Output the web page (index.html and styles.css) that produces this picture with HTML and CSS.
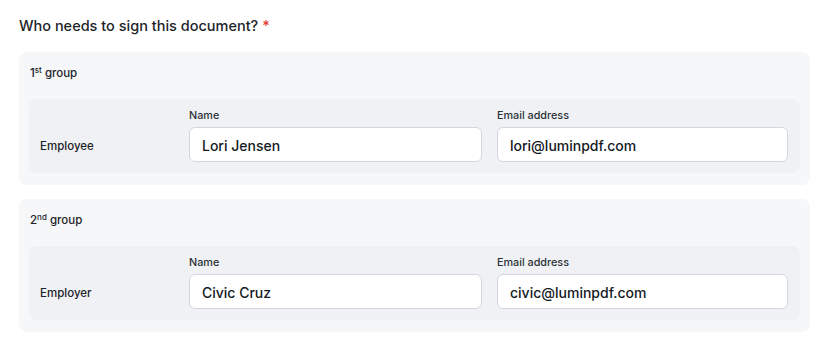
FILE: index.html
```html
<!DOCTYPE html>
<html lang="en">
<head>
    <meta charset="UTF-8">
    <meta name="viewport" content="width=device-width, initial-scale=1.0">
    <title>Signers</title>
    <link rel="stylesheet" href="styles.css">
</head>
<body>
    <div class="signers">
        <h2 class="title">Who needs to sign this document? <span class="req">*</span></h2>

        <div class="group">
            <p class="group-name">1<sup>st</sup> group</p>
            <div class="row">
                <div class="role">Employee</div>
                <label class="field">
                    <span class="label">Name</span>
                    <input class="input" type="text" value="Lori Jensen">
                </label>
                <label class="field">
                    <span class="label">Email address</span>
                    <input class="input" type="text" value="lori@luminpdf.com">
                </label>
            </div>
        </div>

        <div class="group">
            <p class="group-name">2<sup>nd</sup> group</p>
            <div class="row">
                <div class="role">Employer</div>
                <label class="field">
                    <span class="label">Name</span>
                    <input class="input" type="text" value="Civic Cruz">
                </label>
                <label class="field">
                    <span class="label">Email address</span>
                    <input class="input" type="text" value="civic@luminpdf.com">
                </label>
            </div>
        </div>
    </div>
</body>
</html>
```

FILE: styles.css
```css
*{
    margin: 0;
    padding: 0;
    box-sizing: border-box;
}
body{
    font-family: Inter, "Noto Sans", sans-serif;
    color: #1c2329;
    background: #fff;
}
.signers{
    padding: 16px 19px 0 19px;
    width: 829px;
}
.title{
    font-size: 14.5px;
    font-weight: 500;
    line-height: 20px;
    margin-bottom: 16px;
}
.req{
    color: #e5382b;
}
.group{
    background: #f6f7f9;
    border-radius: 8px;
    padding: 12px 10px 12px 10px;
    margin-bottom: 14px;
}
.group-name{
    font-size: 11.5px;
    font-weight: 500;
    line-height: 18px;
    padding-left: 1px;
    margin-bottom: 17px;
}
.group-name sup{
    font-size: 8px;
    line-height: 0;
    vertical-align: 4px;
}
.row{
    display: grid;
    grid-template-columns: 134px 293px 1fr;
    column-gap: 15px;
    align-items: end;
    background: #eff1f4;
    border-radius: 8px;
    padding: 11px 12px 11px 11px;
}
.role{
    font-size: 11.5px;
    font-weight: 500;
    line-height: 35px;
    margin-bottom: -2px;
}
.field{
    display: flex;
    flex-direction: column;
    gap: 5px;
}
.label{
    font-size: 10.8px;
    font-weight: 500;
    line-height: 12px;
    color: #2b3137;
}
.input{
    height: 35px;
    width: 100%;
    border: 1px solid #d3d7dd;
    border-radius: 6px;
    background: #fff;
    padding: 2px 12px 0 12px;
    font-family: Inter, "Noto Sans", sans-serif;
    font-size: 14px;
    font-weight: 500;
    color: #141a1f;
    outline: none;
}
```
